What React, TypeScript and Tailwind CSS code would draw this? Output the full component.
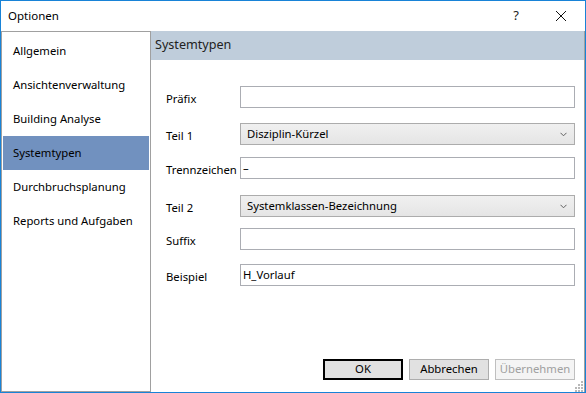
import React from "react";

const navItems = [
  "Allgemein",
  "Ansichtenverwaltung",
  "Building Analyse",
  "Systemtypen",
  "Durchbruchsplanung",
  "Reports und Aufgaben",
];

function Chevron() {
  return (
    <svg width="7" height="5" viewBox="0 0 7 5" className="text-[#606060]">
      <path d="M0.5 0.8 L3.5 3.8 L6.5 0.8" fill="none" stroke="currentColor" strokeWidth="1" />
    </svg>
  );
}

function TextRow({ label, value, mt }: { label: string; value?: string; mt: string }) {
  return (
    <div className={`flex items-center ${mt}`}>
      <span className="w-[74px] shrink-0 pt-[5px]">{label}</span>
      <div className="flex h-[22px] w-[335px] items-center border border-[#abadb3] bg-white px-[2px]">
        {value}
      </div>
    </div>
  );
}

function ComboRow({ label, value, mt }: { label: string; value: string; mt: string }) {
  return (
    <div className={`flex items-center ${mt}`}>
      <span className="w-[74px] shrink-0 pt-[5px]">{label}</span>
      <div className="flex h-[22px] w-[335px] items-center justify-between border border-[#acacac] bg-gradient-to-b from-[#f0f0f0] to-[#e5e5e5] pl-[6px] pr-[7px]">
        <span>{value}</span>
        <Chevron />
      </div>
    </div>
  );
}

function ResizeGrip() {
  const dots = [
    [8, 0],
    [8, 3], [5, 3],
    [8, 6], [5, 6], [2, 6],
    [8, 9], [5, 9], [2, 9],
  ];
  return (
    <svg width="11" height="11" viewBox="0 0 11 11" className="absolute bottom-0 right-0">
      {dots.map(([x, y], i) => (
        <rect key={i} x={x} y={y} width="2" height="2" fill="#b8b8b8" />
      ))}
    </svg>
  );
}

export default function App() {
  return (
    <div
      className="relative flex h-[393px] w-[586px] flex-col border border-[#1883d7] bg-white text-[11.3px] text-black"
      style={{ fontFamily: '"Noto Sans", "Open Sans", sans-serif' }}
    >
      {/* title bar */}
      <div className="flex h-[30px] shrink-0 items-center bg-white">
        <span className="ml-[7px] text-[11.5px]">Optionen</span>
        <span className="ml-auto mr-[36px] text-[13px] text-[#222]">?</span>
        <svg width="12" height="12" viewBox="0 0 12 12" className="mr-[18px]">
          <path d="M1 1 L11 11 M11 1 L1 11" stroke="#111" strokeWidth="1" />
        </svg>
      </div>

      <div className="flex min-h-0 flex-1">
        {/* nav */}
        <div className="flex w-[150px] shrink-0 flex-col border border-[#a0a0a0] bg-white pt-[2px]">
          {navItems.map((item) => (
            <div
              key={item}
              className={`mx-[1px] flex h-[34px] items-center pl-[10px] ${
                item === "Systemtypen" ? "bg-[#7191bf]" : ""
              }`}
            >
              {item}
            </div>
          ))}
        </div>

        {/* content */}
        <div className="relative flex flex-1 flex-col border-r border-[#a0a0a0]">
          <div className="flex h-[29px] shrink-0 items-center bg-[#bfcddb] pl-[4px] text-[12.6px] text-[#222]">
            Systemtypen
          </div>
          <div className="flex flex-col pl-[15px]">
            <TextRow label="Präfix" mt="mt-[26px]" />
            <ComboRow label="Teil 1" value="Disziplin-Kürzel" mt="mt-[15px]" />
            <TextRow label="Trennzeichen" value="–" mt="mt-[12px]" />
            <ComboRow label="Teil 2" value="Systemklassen-Bezeichnung" mt="mt-[16px]" />
            <TextRow label="Suffix" mt="mt-[11px]" />
            <TextRow label="Beispiel" value="H_Vorlauf" mt="mt-[14px]" />
          </div>

          <div className="mt-auto mb-[12px] mr-[9px] flex justify-end gap-[6px]">
            <button className="h-[21px] w-[80px] border-2 border-black bg-[#e1e1e1]">OK</button>
            <button className="h-[21px] w-[80px] border border-[#adadad] bg-[#e1e1e1]">Abbrechen</button>
            <button className="h-[21px] w-[80px] border border-[#bfbfbf] bg-[#f4f4f4] text-[#a0a0a0]">
              Übernehmen
            </button>
          </div>
          <ResizeGrip />
        </div>
      </div>
    </div>
  );
}
